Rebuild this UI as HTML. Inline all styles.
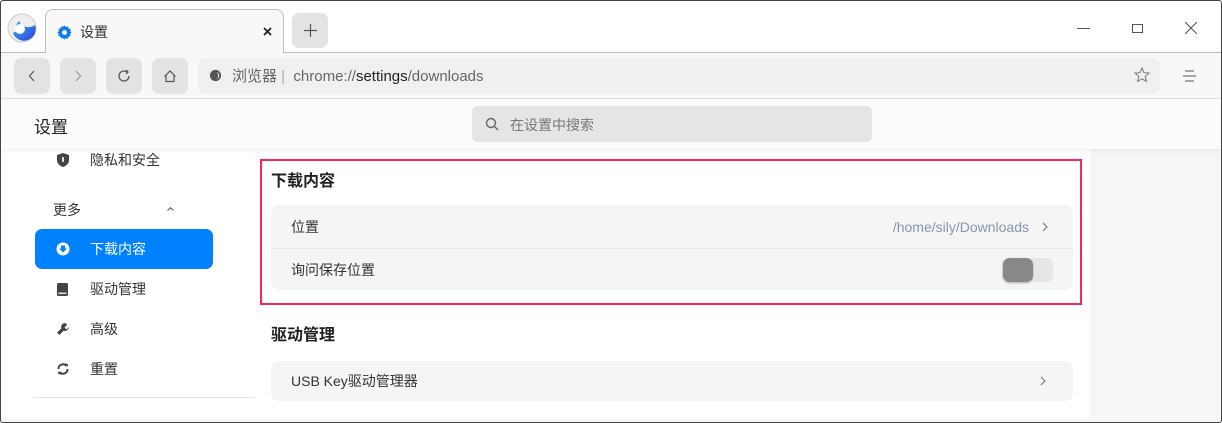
<!DOCTYPE html>
<html><head><meta charset="utf-8"><style>
*{box-sizing:border-box;margin:0;padding:0}
body{width:1222px;height:423px;overflow:hidden;font-family:"Liberation Sans","Noto Sans CJK SC",sans-serif;background:#fff;position:relative;color:#222}
.win{position:absolute;left:0;top:0;width:1222px;height:423px;overflow:hidden;background:#fff}
.frame{position:absolute;left:0;top:0;width:1222px;height:423px;border:1px solid #444;border-radius:3px;z-index:10;pointer-events:none}
.abs{position:absolute}
.tabstrip{left:0;top:0;width:1222px;height:53px;background:#fff;border-bottom:1px solid #bcbcbc}
.tab{left:45px;top:9px;width:239px;height:45px;background:#f8f8f8;border:1px solid #bcbcbc;border-bottom:none;border-radius:8px 8px 0 0}
.btn{background:#e3e3e3;border-radius:7px;width:36px;height:36px;display:flex;align-items:center;justify-content:center}
.toolbar{left:0;top:53px;width:1222px;height:46px;background:#f8f8f8;border-bottom:1px solid #ddd}
.header{left:0;top:99px;width:1222px;height:50px;background:#fbfbfb;box-shadow:0 2px 4px rgba(0,0,0,.06);z-index:2}
.side-item{position:absolute;left:35px;width:178px;height:40px;border-radius:7px;display:flex;align-items:center;font-size:14px;color:#333}
.side-item .ic{width:55px;display:flex;justify-content:center}
.row{position:absolute;left:271px;width:802px;background:#f5f5f5;font-size:14px;color:#333;display:flex;align-items:center;padding-left:20px}
</style></head><body><div class="win">
<div class="abs tabstrip"></div>
<svg class="abs" style="left:7px;top:13px" width="30" height="30" viewBox="0 0 30 30"><defs><linearGradient id="g" x1="0" y1="0" x2="1" y2="1"><stop offset="0" stop-color="#28b8ff"/><stop offset="1" stop-color="#3a3ad8"/></linearGradient></defs><circle cx="15" cy="15" r="14" fill="#eee" stroke="#ccc"/><path d="M6 20 A11 11 0 0 0 28 12 A10 9 0 0 1 12 8 A8 8 0 0 0 10 18 Z" fill="url(#g)"/><circle cx="13" cy="16" r="5" fill="#fff"/></svg>
<div class="abs tab"></div>
<svg class="abs" style="left:57px;top:25px" width="15" height="15" viewBox="0 0 16 16"><path d="M8 0.5l1.6 1.6 2.2-.5.6 2.2 2.2.6-.5 2.2L15.5 8l-1.6 1.6.5 2.2-2.2.6-.6 2.2-2.2-.5L8 15.5l-1.6-1.6-2.2.5-.6-2.2-2.2-.6.5-2.2L.5 8l1.6-1.6-.5-2.2 2.2-.6.6-2.2 2.2.5z" fill="#0a7cf0"/><circle cx="8" cy="8" r="2.6" fill="#fff"/></svg>
<div class="abs" style="left:80px;top:22px;font-size:14px;color:#333">设置</div>
<svg class="abs" style="left:263px;top:27px" width="9" height="9" viewBox="0 0 9 9"><path d="M1 1l7 7M8 1L1 8" stroke="#222" stroke-width="1.8"/></svg>
<div class="abs btn" style="left:292px;top:13px;width:36px;height:35px"><svg width="13" height="13" viewBox="0 0 13 13"><path d="M6.5 0v13M0 6.5h13" stroke="#555" stroke-width="1.2"/></svg></div>
<div class="abs" style="left:1077px;top:28px;width:13px;height:1px;background:#555"></div>
<div class="abs" style="left:1132px;top:24px;width:11px;height:9px;border:1px solid #555"></div>
<svg class="abs" style="left:1185px;top:22px" width="12" height="12" viewBox="0 0 12 12"><path d="M0 0l12 12M12 0L0 12" stroke="#555" stroke-width="1.1"/></svg>
<div class="abs toolbar"></div>
<div class="abs btn" style="left:14px;top:58px"><svg width="8" height="12" viewBox="0 0 8 12"><path d="M6 1L1.5 6 6 11" fill="none" stroke="#555" stroke-width="1.2"/></svg></div>
<div class="abs btn" style="left:60px;top:58px"><svg width="8" height="12" viewBox="0 0 8 12"><path d="M2 1l4.5 5L2 11" fill="none" stroke="#999" stroke-width="1.2"/></svg></div>
<div class="abs btn" style="left:106px;top:58px"><svg width="14" height="14" viewBox="0 0 14 14"><path d="M12 7A5 5 0 1 1 10 3" fill="none" stroke="#555" stroke-width="1.3"/><path d="M9 1l2 2-2 2" fill="none" stroke="#555" stroke-width="1.3"/></svg></div>
<div class="abs btn" style="left:152px;top:58px"><svg width="14" height="14" viewBox="0 0 14 14"><path d="M1.5 7.5L7 2l5.5 5.5M3 6v6.5h8V6" fill="none" stroke="#555" stroke-width="1.2"/></svg></div>
<div class="abs" style="left:198px;top:58px;width:962px;height:36px;background:#eff0f2;border-radius:8px"></div>
<svg class="abs" style="left:209px;top:69px" width="13" height="13" viewBox="0 0 14 14"><circle cx="7" cy="7" r="6" fill="#555"/><path d="M7 3a4 4 0 0 1 0 8a3 4 0 0 0 0-8z" fill="#fff"/></svg>
<div class="abs" style="left:232px;top:65px;font-size:15px;color:#666">浏览器 <span style="color:#aaa">|</span> &nbsp;chrome://<span style="color:#222">settings</span>/downloads</div>
<svg class="abs" style="left:1134px;top:67px" width="16" height="16" viewBox="0 0 16 16"><path d="M8 1l2 4.7 5 .4-3.8 3.3 1.2 5L8 11.8 3.6 14.4l1.2-5L1 6.1l5-.4z" fill="none" stroke="#777" stroke-width="1"/></svg>
<svg class="abs" style="left:1183px;top:70px" width="13" height="12" viewBox="0 0 13 12"><path d="M2 1h9M0 6h13M2 11h9" stroke="#555" stroke-width="1"/></svg>
<div class="abs header"></div>
<div class="abs" style="left:34px;top:113px;font-size:17px;color:#222;z-index:3">设置</div>
<div class="abs" style="left:472px;top:106px;width:400px;height:36px;background:#e5e5e5;border-radius:6px;z-index:3;font-size:14px;color:#777;padding:9px 0 0 38px">在设置中搜索</div>
<svg class="abs" style="left:485px;top:117px;z-index:3" width="14" height="14" viewBox="0 0 14 14"><circle cx="6" cy="6" r="4.5" fill="none" stroke="#666" stroke-width="1.4"/><path d="M9.5 9.5L13 13" stroke="#666" stroke-width="1.4"/></svg>
<div class="abs" style="left:1090px;top:149px;width:132px;height:274px;background:#f6f6f6"></div>
<div class="abs" style="left:0;top:418px;width:1222px;height:5px;background:#f6f6f6"></div>
<div class="side-item" style="top:140px"><div class="ic"><svg width="12" height="14" viewBox="0 0 12 14"><path d="M6 0L12 2v5c0 4-3 6-6 7C3 13 0 11 0 7V2z" fill="#444"/><rect x="5.2" y="4" width="1.6" height="5" fill="#fff"/></svg></div><span>隐私和安全</span></div>
<div class="abs" style="left:53px;top:200px;font-size:14px;color:#333">更多</div>
<svg class="abs" style="left:167px;top:207px" width="7" height="4" viewBox="0 0 7 4"><path d="M0.5 3.5L3.5 0.7 6.5 3.5" fill="none" stroke="#555"/></svg>
<div class="side-item" style="top:229px;background:#0081ff;color:#fff"><div class="ic"><svg width="14" height="14" viewBox="0 0 14 14"><circle cx="7" cy="7" r="6.5" fill="#fff"/><path d="M5 3.5h4v3h2L7 10.5 3 6.5h2z" fill="#0081ff"/></svg></div><span>下载内容</span></div>
<div class="side-item" style="top:269px"><div class="ic"><svg width="11" height="13" viewBox="0 0 11 13"><rect width="11" height="13" rx="1.5" fill="#444"/><rect x="1.5" y="9.5" width="8" height="1.6" fill="#ddd"/></svg></div><span>驱动管理</span></div>
<div class="side-item" style="top:309px"><div class="ic"><svg width="14" height="14" viewBox="0 0 14 14"><path d="M9 1a4 4 0 0 0-3.7 5.3L1 10.6 3.4 13l4.3-4.3A4 4 0 0 0 13 5L10.5 7.5 8.5 5.5 11 3A4 4 0 0 0 9 1z" fill="#444"/></svg></div><span>高级</span></div>
<div class="side-item" style="top:349px"><div class="ic"><svg width="14" height="14" viewBox="0 0 14 14"><path d="M2.5 7A4.5 4.5 0 0 1 10.5 4M11.5 7A4.5 4.5 0 0 1 3.5 10" fill="none" stroke="#444" stroke-width="2"/><path d="M9 1.5l3 .5-.5 3zM5 12.5l-3-.5.5-3z" fill="#444"/></svg></div><span>重置</span></div>
<div class="abs" style="left:34px;top:397px;width:220px;height:1px;background:#e0e0e0"></div>
<div class="abs" style="left:260px;top:159px;width:822px;height:146px;border:2px solid #f5285a"></div>
<div class="abs" style="left:271px;top:167px;font-size:16px;font-weight:bold;color:#222">下载内容</div>
<div class="row" style="top:205px;height:44px;border-radius:8px 8px 0 0;border-bottom:1px solid #e8e8e8">位置<span style="position:absolute;right:44px;color:#8797a8">/home/sily/Downloads</span><svg style="position:absolute;right:25px" width="6" height="10" viewBox="0 0 6 10"><path d="M1 1l4 4-4 4" fill="none" stroke="#777" stroke-width="1.1"/></svg></div>
<div class="row" style="top:249px;height:41px;border-radius:0 0 8px 8px">询问保存位置</div>
<div class="abs" style="left:1002px;top:258px;width:51px;height:24px;background:#e6e6e6;border-radius:6px"></div>
<div class="abs" style="left:1003px;top:258px;width:30px;height:24px;background:#888;border-radius:7px;box-shadow:0 1px 2px rgba(0,0,0,.3)"></div>
<div class="abs" style="left:271px;top:321px;font-size:16px;font-weight:bold;color:#222">驱动管理</div>
<div class="row" style="top:361px;height:40px;border-radius:8px">USB Key驱动管理器<svg style="position:absolute;right:27px" width="6" height="10" viewBox="0 0 6 10"><path d="M1 1l4 4-4 4" fill="none" stroke="#777" stroke-width="1.1"/></svg></div>
</div><div class="frame"></div></body></html>
